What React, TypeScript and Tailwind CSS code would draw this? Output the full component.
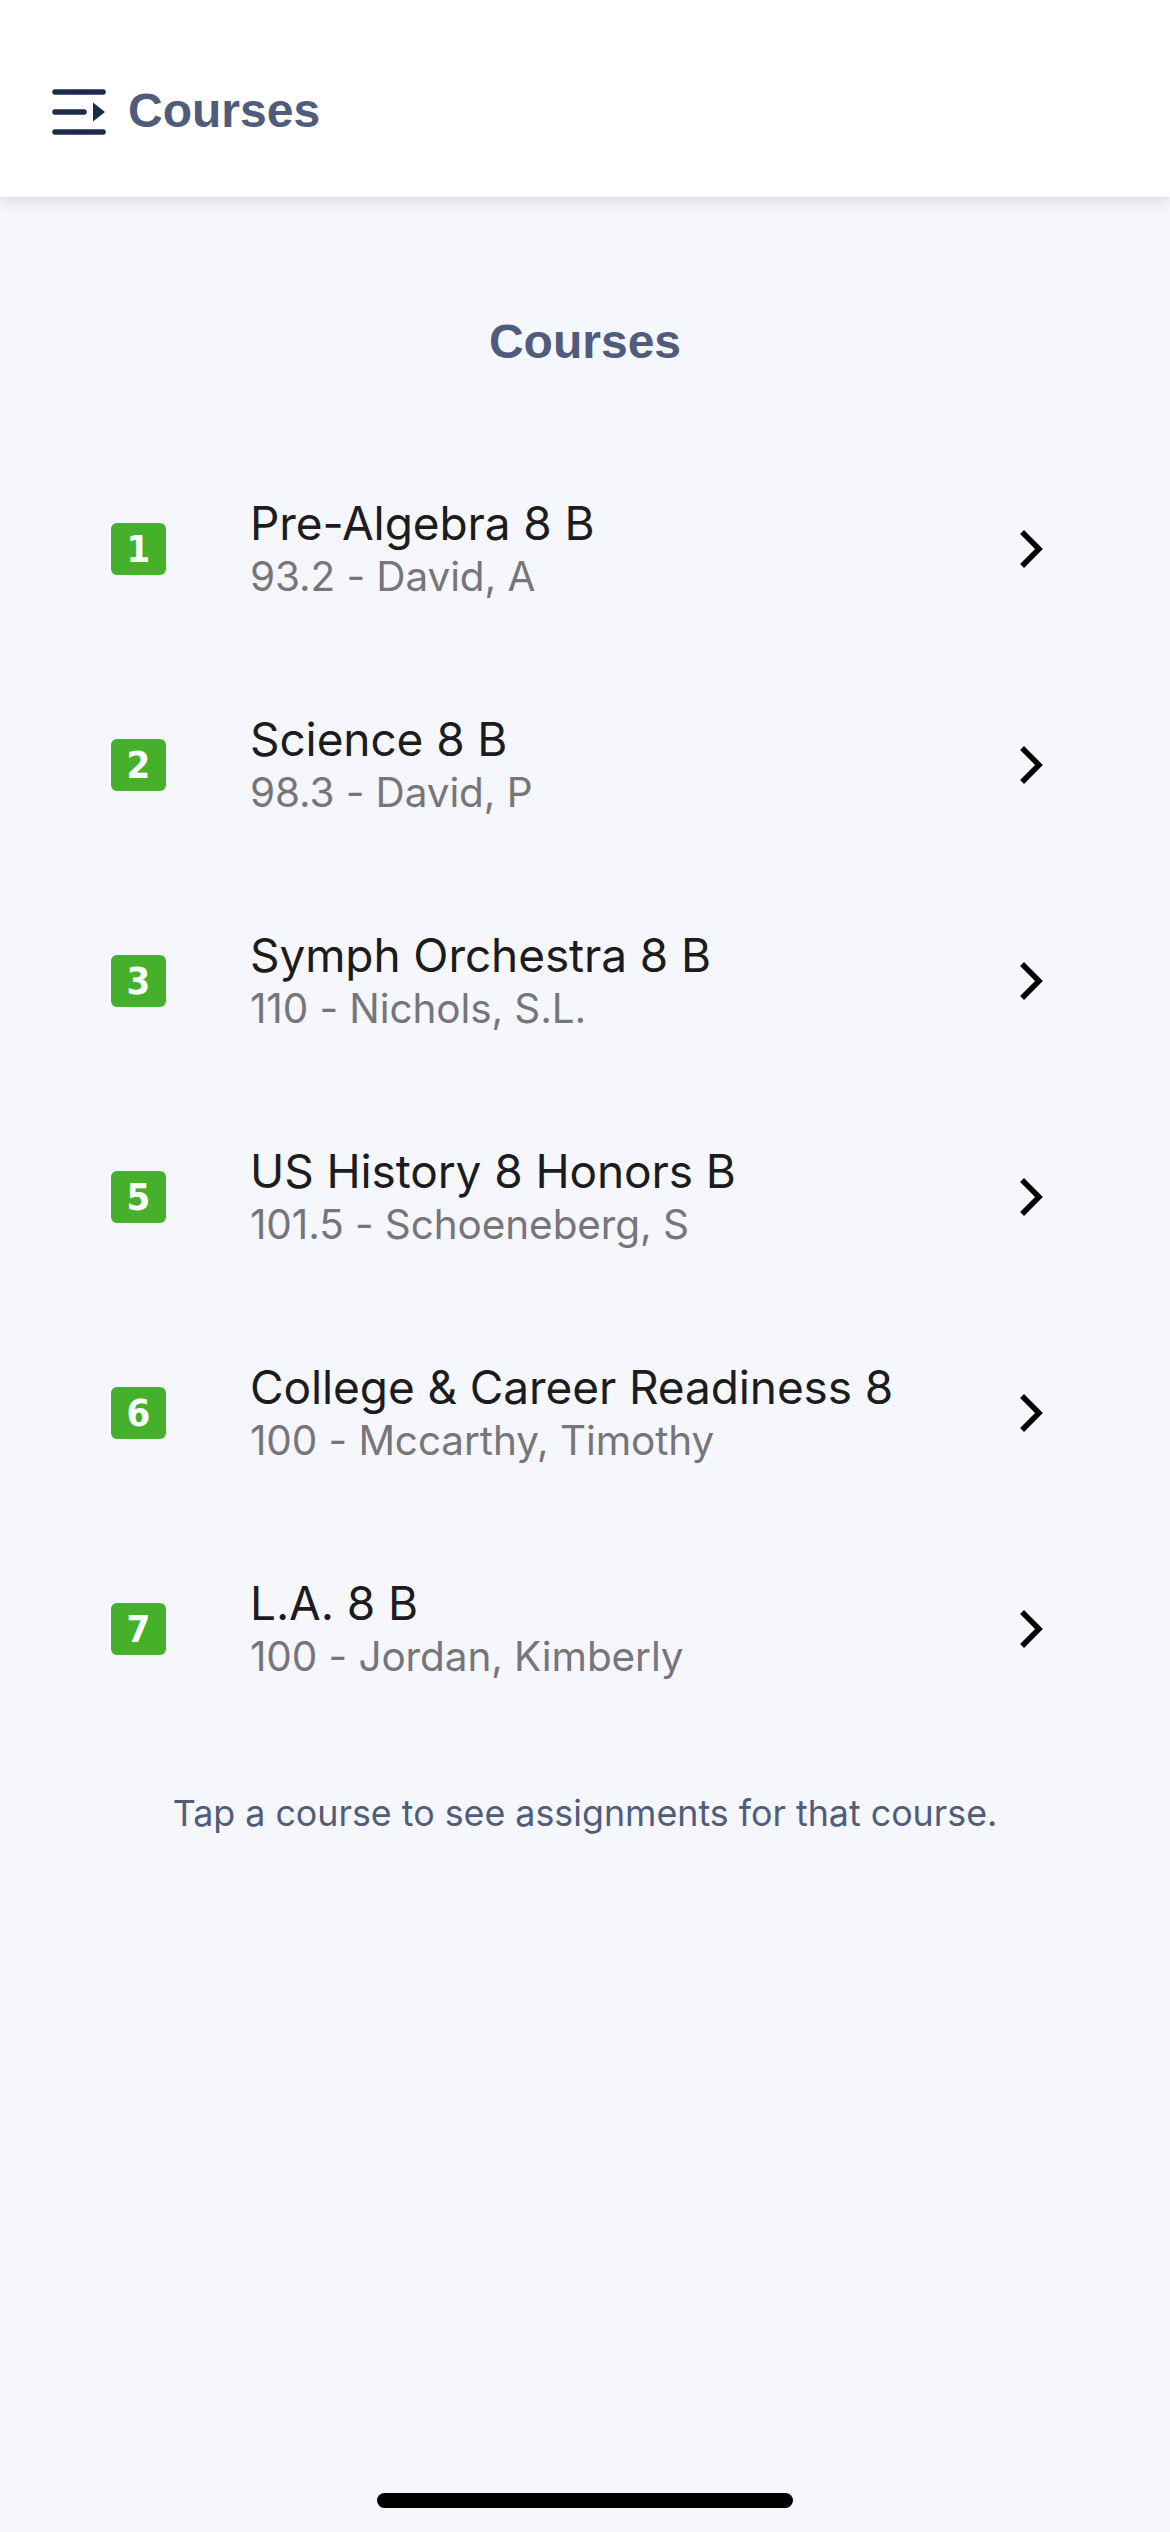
import React from "react";

const courses = [
  { n: "1", title: "Pre-Algebra 8 B", sub: "93.2 - David, A" },
  { n: "2", title: "Science 8 B", sub: "98.3 - David, P" },
  { n: "3", title: "Symph Orchestra 8 B", sub: "110 - Nichols, S.L." },
  { n: "5", title: "US History 8 Honors B", sub: "101.5 - Schoeneberg, S" },
  { n: "6", title: "College & Career Readiness 8", sub: "100 - Mccarthy, Timothy" },
  { n: "7", title: "L.A. 8 B", sub: "100 - Jordan, Kimberly" },
];

function MenuIcon() {
  return (
    <svg width="54" height="46" viewBox="0 0 54 46" fill="none">
      <line x1="3" y1="3" x2="51" y2="3" stroke="#1b2b4b" strokeWidth="5.5" strokeLinecap="round" />
      <line x1="3" y1="23" x2="32" y2="23" stroke="#1b2b4b" strokeWidth="5.5" strokeLinecap="round" />
      <polygon points="41,13.5 53,23 41,32.5" fill="#1b2b4b" />
      <line x1="3" y1="43" x2="51" y2="43" stroke="#1b2b4b" strokeWidth="5.5" strokeLinecap="round" />
    </svg>
  );
}

function Chevron() {
  return (
    <svg width="26" height="38" viewBox="0 0 26 38" fill="none">
      <polyline points="5,4 20,19 5,34" stroke="#000" strokeWidth="5.5" strokeLinecap="square" strokeLinejoin="miter" fill="none" />
    </svg>
  );
}

export default function App() {
  return (
    <div className="min-h-[2532px] w-[1170px] bg-[#f6f7fc] flex flex-col relative">
      <header className="h-[197px] bg-white flex items-center pt-[24px] pl-[52px] shadow-[0_4px_14px_rgba(0,0,0,0.12)] relative z-10">
        <div className="mt-[2px]"><MenuIcon /></div>
        <span className="ml-[22px] text-[48px] font-bold text-[#505c7c] leading-none [font-family:'Liberation_Sans',Arial,sans-serif]">
          Courses
        </span>
      </header>

      <h1 className="mt-[116px] text-center text-[48px] font-bold text-[#505c7c] leading-[58px] [font-family:'Liberation_Sans',Arial,sans-serif]">
        Courses
      </h1>

      <ul className="mt-[70px] flex flex-col">
        {courses.map((c) => (
          <li key={c.n} className="h-[216px] flex items-center pl-[111px] pr-[125px]">
            <div className="w-[55px] h-[52px] rounded-[6px] bg-[#45b12b] flex items-center justify-center text-white text-[38px] font-bold leading-none [font-family:'DejaVu_Sans_Condensed','DejaVu_Sans',sans-serif]">
              {c.n}
            </div>
            <div className="ml-[84px] flex-1 flex flex-col [font-family:Inter,'Noto_Sans',sans-serif]">
              <span className="text-[46px] leading-[56px] text-[#1c1c1e] tracking-[-0.1px]">{c.title}</span>
              <span className="text-[40.5px] leading-[52px] text-[#76767a] tracking-[-0.1px]">{c.sub}</span>
            </div>
            <Chevron />
          </li>
        ))}
      </ul>

      <p className="mt-[53px] text-center text-[35.8px] leading-[46px] text-[#505c7c] [font-family:Inter,'Noto_Sans',sans-serif]">
        Tap a course to see assignments for that course.
      </p>

      <div className="absolute left-[377px] top-[2493px] w-[416px] h-[15px] rounded-full bg-black" />
    </div>
  );
}
